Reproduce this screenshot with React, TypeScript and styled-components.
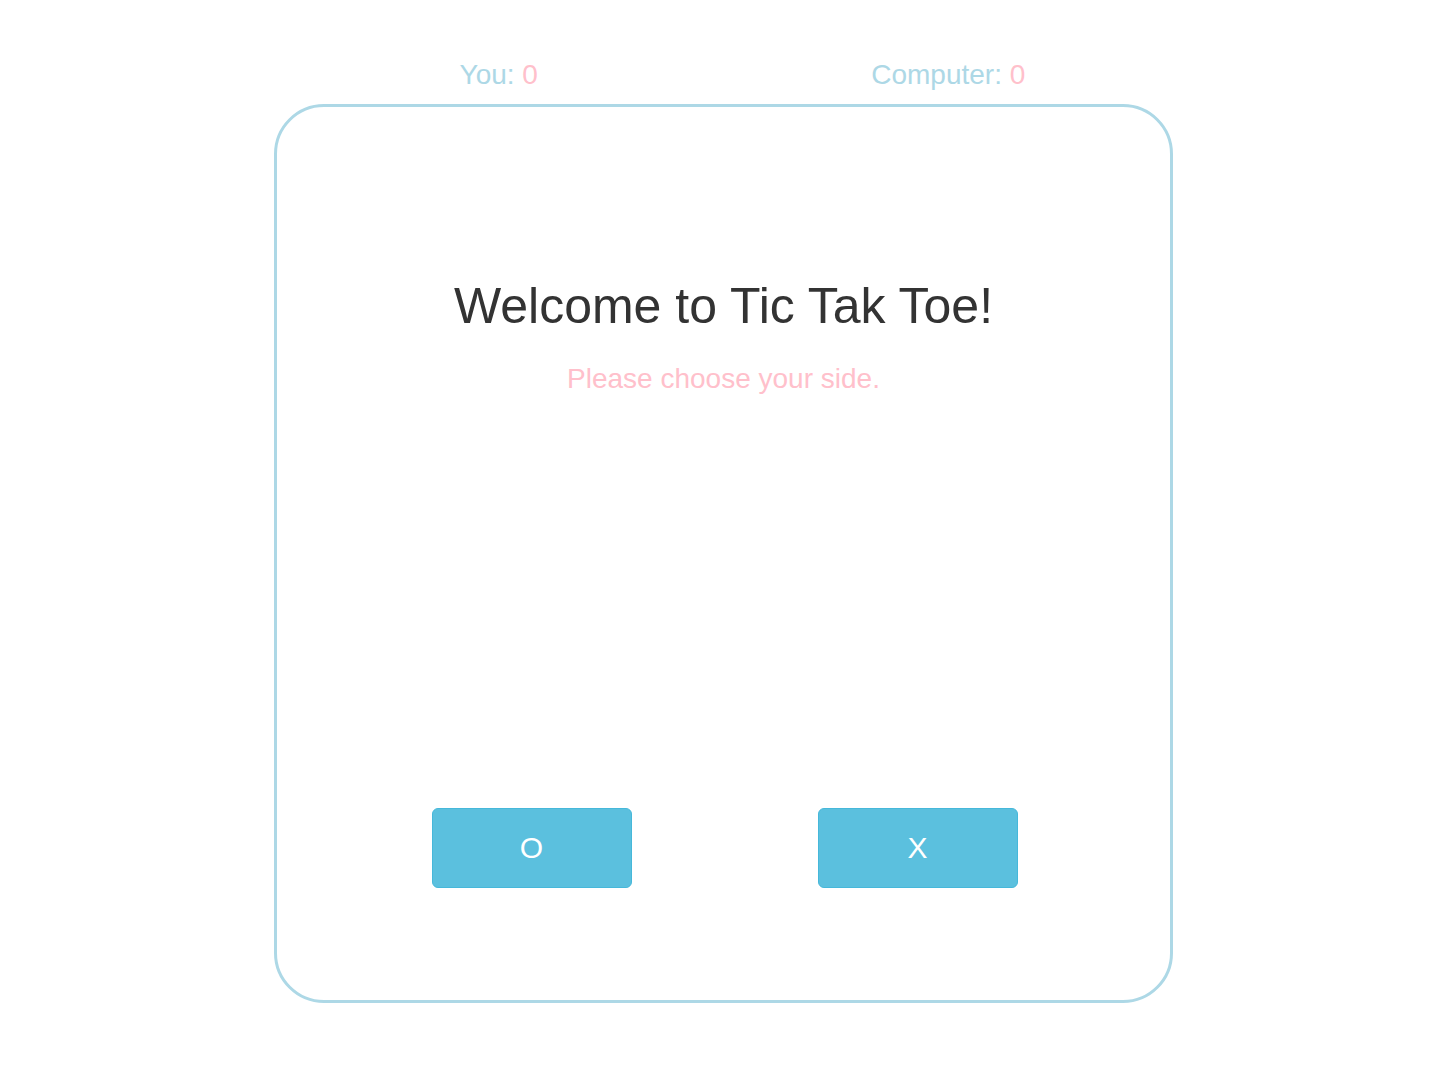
import React from "react";
import styled, { createGlobalStyle } from "styled-components";

const GlobalStyle = createGlobalStyle`
  html, body {
    margin: 0;
    padding: 0;
    background: #ffffff;
  }
  body {
    font-family: "Liberation Sans", Arial, Helvetica, sans-serif;
    padding-right: 3px;
  }
`;

const Page = styled.div`
  width: 899px;
  margin: 0 auto;
  padding-top: 59px;
`;

const ScoreBar = styled.div`
  display: grid;
  grid-template-columns: 1fr 1fr;
  margin-bottom: 13px;
`;

const Score = styled.div`
  text-align: center;
  font-size: 28px;
  line-height: 32px;
  color: #add8e6;
`;

const Points = styled.span`
  color: #ffc0cb;
`;

const Board = styled.div`
  box-sizing: border-box;
  width: 899px;
  height: 899px;
  border: 3px solid #add8e6;
  border-radius: 50px;
  display: flex;
  flex-direction: column;
  align-items: center;
  padding-top: 172px;
  padding-bottom: 112px;
`;

const Title = styled.h1`
  margin: 0;
  font-size: 50px;
  font-weight: 400;
  line-height: 55px;
  color: #333333;
`;

const Subtitle = styled.p`
  margin: 29px 0 0;
  font-size: 28px;
  line-height: 32px;
  color: #ffc0cb;
`;

const Choices = styled.div`
  margin-top: auto;
  display: flex;
  justify-content: center;
  gap: 186px;
  padding-left: 2px;
`;

const SideButton = styled.button`
  box-sizing: border-box;
  width: 200px;
  height: 80px;
  border: 1px solid #46b8da;
  border-radius: 6px;
  background: #5bc0de;
  color: #ffffff;
  font-family: "Liberation Sans", Arial, Helvetica, sans-serif;
  font-size: 30px;
  line-height: 1;
  cursor: pointer;
  padding: 0;
`;

export default function App() {
  return (
    <>
      <GlobalStyle />
      <Page>
        <ScoreBar>
          <Score>
            You: <Points>0</Points>
          </Score>
          <Score>
            Computer: <Points>0</Points>
          </Score>
        </ScoreBar>
        <Board>
          <Title>Welcome to Tic Tak Toe!</Title>
          <Subtitle>Please choose your side.</Subtitle>
          <Choices>
            <SideButton>O</SideButton>
            <SideButton>X</SideButton>
          </Choices>
        </Board>
      </Page>
    </>
  );
}
